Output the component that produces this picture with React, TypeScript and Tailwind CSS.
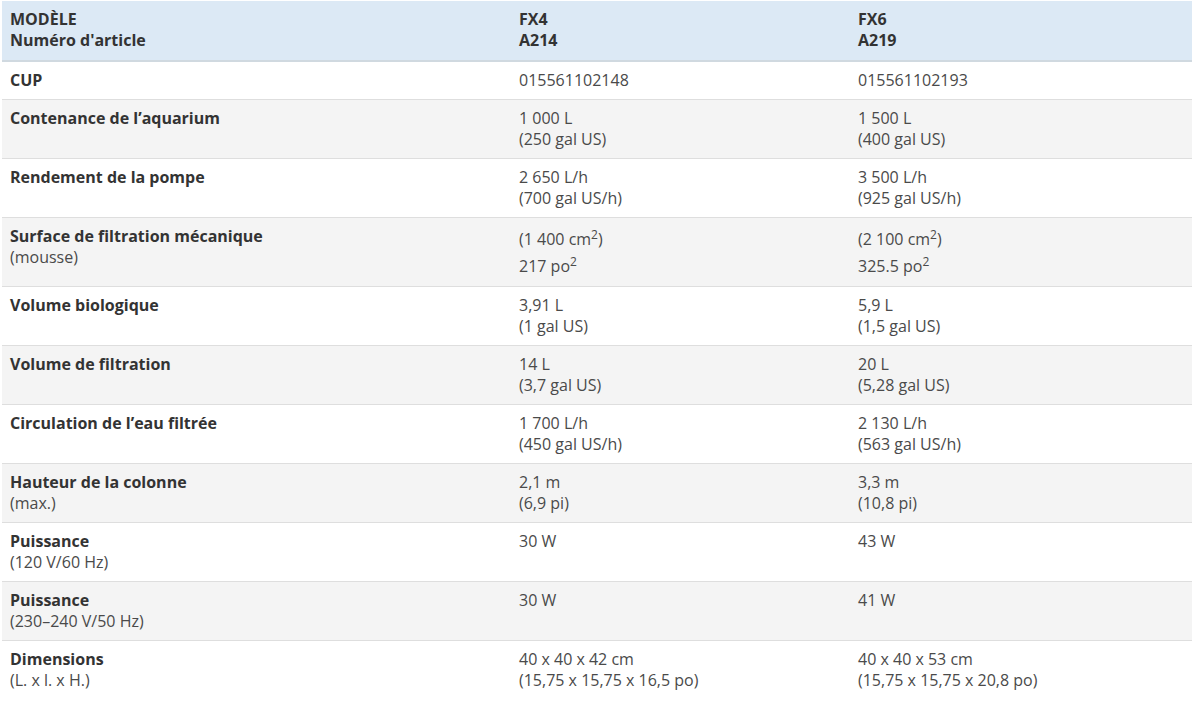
import { ReactNode } from "react"

type Row = {
  label: string
  note?: string
  fx4: ReactNode[]
  fx6: ReactNode[]
  tall?: boolean
}

const rows: Row[] = [
  { label: "CUP", fx4: ["015561102148"], fx6: ["015561102193"] },
  { label: "Contenance de l’aquarium", fx4: ["1 000 L", "(250 gal US)"], fx6: ["1 500 L", "(400 gal US)"] },
  { label: "Rendement de la pompe", fx4: ["2 650 L/h", "(700 gal US/h)"], fx6: ["3 500 L/h", "(925 gal US/h)"] },
  {
    label: "Surface de filtration mécanique",
    note: "(mousse)",
    tall: true,
    fx4: [
      <>(1 400 cm<sup>2</sup>)</>,
      <>217 po<sup>2</sup></>,
    ],
    fx6: [
      <>(2 100 cm<sup>2</sup>)</>,
      <>325.5 po<sup>2</sup></>,
    ],
  },
  { label: "Volume biologique", fx4: ["3,91 L", "(1 gal US)"], fx6: ["5,9 L", "(1,5 gal US)"] },
  { label: "Volume de filtration", fx4: ["14 L", "(3,7 gal US)"], fx6: ["20 L", "(5,28 gal US)"] },
  { label: "Circulation de l’eau filtrée", fx4: ["1 700 L/h", "(450 gal US/h)"], fx6: ["2 130 L/h", "(563 gal US/h)"] },
  { label: "Hauteur de la colonne", note: "(max.)", fx4: ["2,1 m", "(6,9 pi)"], fx6: ["3,3 m", "(10,8 pi)"] },
  { label: "Puissance", note: "(120 V/60 Hz)", fx4: ["30 W"], fx6: ["43 W"] },
  { label: "Puissance", note: "(230–240 V/50 Hz)", fx4: ["30 W"], fx6: ["41 W"] },
  {
    label: "Dimensions",
    note: "(L. x l. x H.)",
    fx4: ["40 x 40 x 42 cm", "(15,75 x 15,75 x 16,5 po)"],
    fx6: ["40 x 40 x 53 cm", "(15,75 x 15,75 x 20,8 po)"],
  },
]

function Values({ lines, tall }: { lines: ReactNode[]; tall?: boolean }) {
  return (
    <td className={tall ? "px-2 pt-2 pb-[6px] align-top" : "px-2 py-2 align-top"}>
      {lines.map((line, i) => (
        <div key={i} className={tall ? "leading-[27px]" : ""}>
          {line}
        </div>
      ))}
    </td>
  )
}

export default function App() {
  return (
    <div
      className="bg-white pt-px pl-[2px] min-h-[708px] text-[16px] leading-[21px] text-[#4a4a4a]"
      style={{ fontFamily: '"Open Sans", "Liberation Sans", sans-serif' }}
    >
      <table className="w-[1190px] table-fixed border-collapse">
        <colgroup>
          <col className="w-[509px]" />
          <col className="w-[339px]" />
          <col />
        </colgroup>
        <thead>
          <tr className="bg-[#dce9f5] border-b-2 border-[#d0d9e0] text-left text-[#333]">
            <th className="px-2 pt-2 pb-[9px] font-bold align-top">
              <div>MODÈLE</div>
              <div>Numéro d'article</div>
            </th>
            <th className="px-2 pt-2 pb-[9px] font-bold align-top">
              <div>FX4</div>
              <div>A214</div>
            </th>
            <th className="px-2 pt-2 pb-[9px] font-bold align-top">
              <div>FX6</div>
              <div>A219</div>
            </th>
          </tr>
        </thead>
        <tbody>
          {rows.map((row, i) => (
            <tr
              key={i}
              className={
                i % 2 === 1
                  ? "bg-[#f4f4f4] border-b border-[#dedede]"
                  : "bg-white border-b border-[#dedede] last:border-b-0"
              }
            >
              <td className="px-2 py-2 align-top">
                <div className="font-bold text-[#333]">{row.label}</div>
                {row.note && <div>{row.note}</div>}
              </td>
              <Values lines={row.fx4} tall={row.tall} />
              <Values lines={row.fx6} tall={row.tall} />
            </tr>
          ))}
        </tbody>
      </table>
    </div>
  )
}
